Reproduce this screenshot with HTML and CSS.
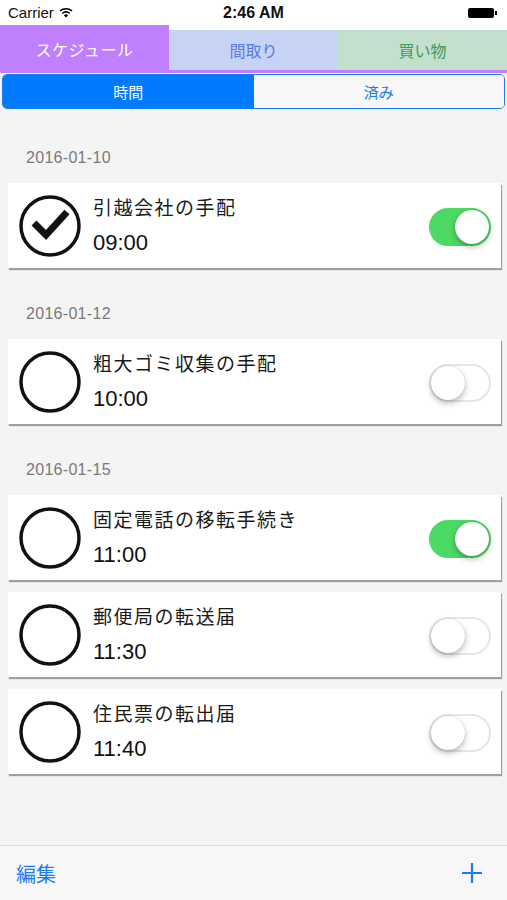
FILE: index.html
```html
<!DOCTYPE html>
<html lang="ja">
<head>
    <meta charset="UTF-8">
    <meta name="viewport" content="width=device-width, initial-scale=1.0">
    <title>スケジュール</title>
    <link rel="stylesheet" href="styles.css">
</head>
<body>
    <div class="statusbar">
        <div class="carrier">
            Carrier
            <svg class="wifi" width="14" height="11" viewBox="0 0 14 11">
                <path d="M1 4 A9 9 0 0 1 13 4" fill="none" stroke="#000" stroke-width="1.6"/>
                <path d="M3.3 6.3 A6 6 0 0 1 10.7 6.3" fill="none" stroke="#000" stroke-width="1.6"/>
                <path d="M7 10.5 L4.9 8.4 A3 3 0 0 1 9.1 8.4 Z" fill="#000"/>
            </svg>
        </div>
        <div class="clock">2:46 AM</div>
        <div class="battery"><span class="battery-body"></span><span class="battery-nub"></span></div>
    </div>

    <div class="tabs">
        <div class="tab tab-schedule">スケジュール</div>
        <div class="tab tab-plan">間取り</div>
        <div class="tab tab-shop">買い物</div>
    </div>

    <div class="segment">
        <div class="segment-item active">時間</div>
        <div class="segment-item">済み</div>
    </div>

    <div class="list">
        <div class="section-title">2016-01-10</div>
        <div class="card">
            <svg class="check" width="64" height="64" viewBox="0 0 64 64">
                <circle cx="32" cy="32" r="29" fill="none" stroke="#111" stroke-width="3.5"/>
                <polyline points="16,29 28,41 49,18" fill="none" stroke="#111" stroke-width="7"/>
            </svg>
            <div class="card-text">
                <div class="card-title">引越会社の手配</div>
                <div class="card-time">09:00</div>
            </div>
            <div class="switch on"><span class="knob"></span></div>
        </div>

        <div class="section-title">2016-01-12</div>
        <div class="card">
            <svg class="check" width="64" height="64" viewBox="0 0 64 64">
                <circle cx="32" cy="32" r="29" fill="none" stroke="#111" stroke-width="3.5"/>
            </svg>
            <div class="card-text">
                <div class="card-title">粗大ゴミ収集の手配</div>
                <div class="card-time">10:00</div>
            </div>
            <div class="switch"><span class="knob"></span></div>
        </div>

        <div class="section-title">2016-01-15</div>
        <div class="card">
            <svg class="check" width="64" height="64" viewBox="0 0 64 64">
                <circle cx="32" cy="32" r="29" fill="none" stroke="#111" stroke-width="3.5"/>
            </svg>
            <div class="card-text">
                <div class="card-title">固定電話の移転手続き</div>
                <div class="card-time">11:00</div>
            </div>
            <div class="switch on"><span class="knob"></span></div>
        </div>
        <div class="card">
            <svg class="check" width="64" height="64" viewBox="0 0 64 64">
                <circle cx="32" cy="32" r="29" fill="none" stroke="#111" stroke-width="3.5"/>
            </svg>
            <div class="card-text">
                <div class="card-title">郵便局の転送届</div>
                <div class="card-time">11:30</div>
            </div>
            <div class="switch"><span class="knob"></span></div>
        </div>
        <div class="card">
            <svg class="check" width="64" height="64" viewBox="0 0 64 64">
                <circle cx="32" cy="32" r="29" fill="none" stroke="#111" stroke-width="3.5"/>
            </svg>
            <div class="card-text">
                <div class="card-title">住民票の転出届</div>
                <div class="card-time">11:40</div>
            </div>
            <div class="switch"><span class="knob"></span></div>
        </div>
    </div>

    <div class="toolbar">
        <div class="edit">編集</div>
        <svg class="plus" width="22" height="22" viewBox="0 0 22 22">
            <path d="M11 1 V21 M1 11 H21" stroke="#1a7cf5" stroke-width="2.2"/>
        </svg>
    </div>
</body>
</html>
```

FILE: styles.css
```css
* {
    box-sizing: border-box;
}

body {
    margin: 0;
    width: 507px;
    height: 900px;
    display: flex;
    flex-direction: column;
    background-color: #f4f4f4;
    font-family: "Liberation Sans", "Noto Sans CJK JP", sans-serif;
    color: #111;
    overflow: hidden;
}

.statusbar {
    height: 25px;
    background-color: #fff;
    display: flex;
    align-items: center;
    justify-content: space-between;
    padding: 0 8px;
    position: relative;
}

.carrier {
    font-size: 15px;
    display: flex;
    align-items: center;
    gap: 5px;
}

.clock {
    position: absolute;
    left: 0;
    right: 0;
    text-align: center;
    font-size: 16px;
    font-weight: bold;
}

.battery {
    display: flex;
    align-items: center;
    margin-right: 2px;
}

.battery-body {
    width: 26px;
    height: 10px;
    background-color: #000;
    border-radius: 2px;
}

.battery-nub {
    width: 2px;
    height: 4px;
    background-color: #000;
    margin-left: 1px;
}

.tabs {
    display: flex;
    align-items: flex-end;
    height: 48px;
    background-color: #fff;
    border-bottom: 3px solid #c07ffc;
}

.tab {
    flex: 1;
    display: flex;
    align-items: center;
    justify-content: center;
    font-size: 16px;
    height: 40px;
}

.tab-schedule {
    height: 45px;
    padding-top: 2px;
    background-color: #c07ffc;
    color: #fff;
    letter-spacing: 0.5px;
}

.tab-plan {
    background-color: #c6d3f5;
    color: #5b7be0;
}

.tab-shop {
    background-color: #c3e0cd;
    color: #3e9a5e;
}

.segment {
    display: flex;
    margin: 1px 2px 0;
    height: 35px;
    border: 1px solid #1a7cf5;
    border-radius: 5px;
    overflow: hidden;
    font-size: 15px;
}

.segment-item {
    flex: 1;
    display: flex;
    align-items: center;
    justify-content: center;
    background-color: #f7f7f7;
    color: #1a7cf5;
}

.segment-item.active {
    background-color: #007aff;
    color: #fff;
}

.list {
    flex: 1;
    padding-top: 15px;
}

.section-title {
    padding: 24px 26px 15px;
    font-size: 16px;
    line-height: 20px;
    letter-spacing: 0.3px;
    color: #7a7a7a;
}

.card {
    display: flex;
    align-items: center;
    height: 85px;
    margin: 0 6px 12px 8px;
    padding: 0 10px 0 10px;
    background-color: #fff;
    box-shadow: 1px 2px 1px rgba(0, 0, 0, 0.35);
}

.check {
    flex: none;
}

.card-text {
    flex: 1;
    margin-left: 11px;
    margin-top: 1px;
}

.card-title {
    font-size: 19px;
    line-height: 26px;
    letter-spacing: 1.5px;
    color: #1a1a1a;
}

.card-time {
    font-size: 22px;
    line-height: 26px;
    margin-top: 8px;
    color: #111;
}

.switch {
    width: 62px;
    height: 38px;
    border-radius: 19px;
    border: 2px solid #e6e6e6;
    background-color: #fff;
    position: relative;
    margin-top: 2px;
}

.switch .knob {
    position: absolute;
    top: 0;
    left: 0;
    width: 34px;
    height: 34px;
    border-radius: 50%;
    background-color: #fff;
    box-shadow: 0 3px 6px rgba(0, 0, 0, 0.28), 0 0 1px rgba(0, 0, 0, 0.2);
}

.switch.on {
    background-color: #4cd964;
    border-color: #4cd964;
}

.switch.on .knob {
    left: 24px;
}

.toolbar {
    height: 55px;
    flex: none;
    background-color: #f7f7f7;
    border-top: 1px solid #dcdcdc;
    display: flex;
    align-items: center;
    justify-content: space-between;
    padding: 0 24px 0 16px;
}

.edit {
    font-size: 20px;
    color: #1a7cf5;
}
```
